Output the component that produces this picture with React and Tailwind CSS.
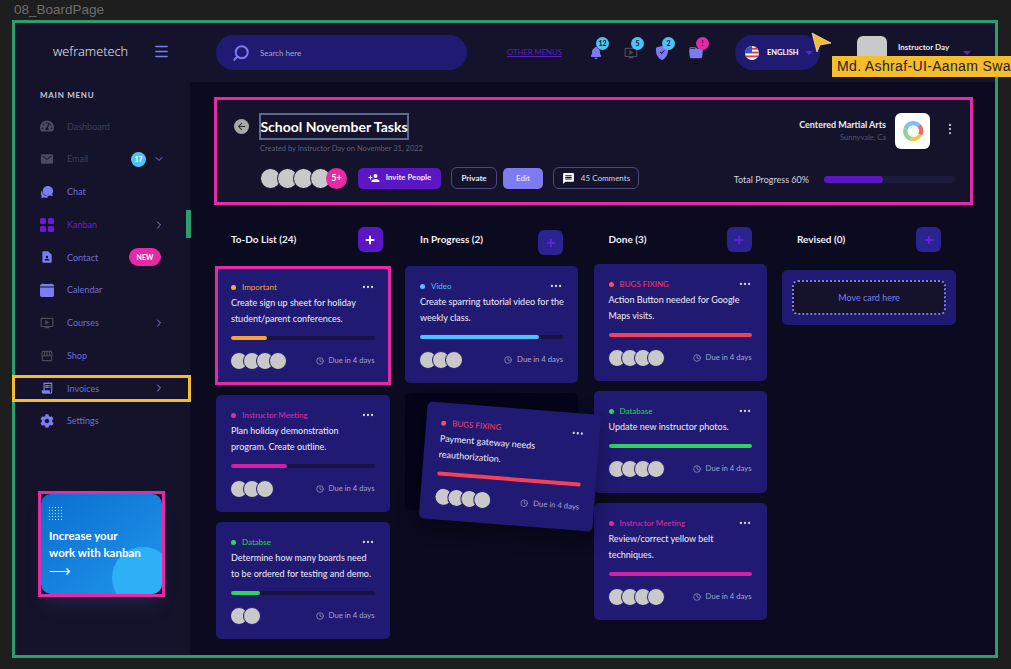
import { ChevronDown, ChevronRight, Clock, Menu, MoreHorizontal, MoreVertical, Plus, Search } from "lucide-react";
import { BsCalendarFill, BsFolderFill, BsShieldFillCheck } from "react-icons/bs";
import { FaCog, FaTachometerAlt } from "react-icons/fa";
import { IoChatbubbles, IoMail, IoNotifications } from "react-icons/io5";
import { MdArrowBack, MdContactPage, MdMessage, MdOndemandVideo, MdPersonAdd, MdReceiptLong, MdStorefront } from "react-icons/md";

const KanbanIcon = ({ className }) => (
  <svg viewBox="0 0 14 14" className={className} fill="currentColor">
    <rect width="6" height="6" rx="1.6" />
    <rect x="8" width="6" height="6" rx="1.6" />
    <rect y="8" width="6" height="6" rx="1.6" />
    <rect x="8" y="8" width="6" height="6" rx="1.6" />
  </svg>
);

const nav = [
  { label: "Dashboard", icon: FaTachometerAlt, iconColor: "text-[#4b4a63]", textColor: "text-[#3f3e58]" },
  { label: "Email", icon: IoMail, iconColor: "text-[#4b4a63]", textColor: "text-[#3f3e58]", badge: "17" },
  { label: "Chat", icon: IoChatbubbles, iconColor: "text-[#7c7cf0]", textColor: "text-[#6f6fd8]" },
  { label: "Kanban", icon: KanbanIcon, iconColor: "text-[#6a1bd1]", textColor: "text-[#6a1bd1]", arrow: true, active: true },
  { label: "Contact", icon: MdContactPage, iconColor: "text-[#7c7cf0]", textColor: "text-[#6f6fd8]", isNew: true },
  { label: "Calendar", icon: BsCalendarFill, iconColor: "text-[#7c7cf0]", textColor: "text-[#6f6fd8]" },
  { label: "Courses", icon: MdOndemandVideo, iconColor: "text-[#4b4a55]", textColor: "text-[#6f6fd8]", arrow: true },
  { label: "Shop", icon: MdStorefront, iconColor: "text-[#4b4a55]", textColor: "text-[#6f6fd8]" },
  { label: "Invoices", icon: MdReceiptLong, iconColor: "text-[#7c7cf0]", textColor: "text-[#6f6fd8]", arrow: true, marked: true },
  { label: "Settings", icon: FaCog, iconColor: "text-[#7c7cf0]", textColor: "text-[#6f6fd8]" },
];

const columns = [
  {
    title: "To-Do List (24)", width: "w-[173.5px]", addClass: "mr-[7px] bg-[#5b17c4] text-white", cardsTop: "mt-[14px]",
    cards: [
      { tag: "Important", tagColor: "text-[#f5a13c]", dot: "bg-[#f5b02e]", text: ["Create sign up sheet for holiday", "student/parent conferences."], bar: "w-[25%] bg-[#f9a23c]", people: 4, marked: true },
      { tag: "Instructor Meeting", tagColor: "text-[#e02aa8]", dot: "bg-[#e02aa8]", text: ["Plan holiday demonstration", "program. Create outline."], bar: "w-[39%] bg-[#d41fa8]", people: 3 },
      { tag: "Databse", tagColor: "text-[#2fd35f]", dot: "bg-[#2fd35f]", text: ["Determine how many boards need", "to be ordered for testing and demo."], bar: "w-[20%] bg-[#2fd35f]", people: 2 },
    ],
  },
  {
    title: "In Progress (2)", width: "w-[173px]", addClass: "mr-[15px] mt-[3px] bg-[#2a2390] text-[#5b24d6]", cardsTop: "mt-[14px]",
    cards: [
      { tag: "Video", tagColor: "text-[#4dc3ff]", dot: "bg-[#4dc3ff]", text: ["Create sparring tutorial video for the", "weekly class."], bar: "w-[83%] bg-[#4dc3ff]", people: 3 },
    ],
    slot: true,
  },
  {
    title: "Done (3)", width: "w-[173px]", addClass: "mr-[15px] bg-[#2a2390] text-[#5b24d6]", cardsTop: "mt-[12px]",
    cards: [
      { tag: "BUGS FIXING", tagColor: "text-[#f0406a]", dot: "bg-[#ff4d5e]", text: ["Action Button needed for Google", "Maps visits."], bar: "w-full bg-[#f5405c]", people: 4 },
      { tag: "Database", tagColor: "text-[#2fd35f]", dot: "bg-[#2fd35f]", text: ["Update new instructor photos."], bar: "w-full bg-[#2fd35f]", people: 4, extra: "!pb-[16px]" },
      { tag: "Instructor Meeting", tagColor: "text-[#e02aa8]", dot: "bg-[#e02aa8]", text: ["Review/correct yellow belt", "techniques."], bar: "w-full bg-[#d41fa8]", people: 4 },
    ],
  },
  { title: "Revised (0)", width: "w-[174px]", addClass: "mr-[15px] bg-[#2a2390] text-[#5b24d6]", cardsTop: "mt-[18px]", cards: [], empty: true },
];

const Avatars = ({ count }) => (
  <div className="flex">
    {Array.from({ length: count }).map((_, i) => (
      <span key={i} className="-my-px -ml-px -mr-1 box-content h-4 w-4 rounded-full border border-[#201a73] bg-[#c9c9c9]" />
    ))}
  </div>
);

const TaskBody = ({ card }) => (
  <>
    <div className="flex h-3 items-center">
      <span className={`h-[5px] w-[5px] rounded-full ${card.dot}`} />
      <span className={`ml-[6px] text-[8px] ${card.tagColor}`}>{card.tag}</span>
      <MoreHorizontal className="ml-auto h-[14px] w-[14px] text-[#d5d5ea]" />
    </div>
    <div className="mt-[2px] text-[9px] leading-4 text-[#f0effa]">
      {card.text.map((line) => (
        <div key={line} className="whitespace-nowrap">{line}</div>
      ))}
    </div>
    <div className="mt-[9px] h-1 rounded-full bg-[#16143f]">
      <div className={`h-full rounded-full ${card.bar}`} />
    </div>
    <div className="mt-[13px] flex items-center">
      <Avatars count={card.people} />
      <span className="ml-auto flex items-center gap-[5px] text-[7.7px] text-[#a7a6cf]">
        <Clock className="h-2 w-2" />
        Due in 4 days
      </span>
    </div>
  </>
);

const TaskCard = ({ card }) => (
  <div className={`rounded-[5px] bg-[#201a73] ${card.marked ? "-mx-px !rounded-none border-[3px] border-[#e52aa5] px-[13px] pb-[13px] pt-[12px]" : "px-[15px] pb-[15px] pt-[14px]"} ${card.extra || ""}`}>
    <TaskBody card={card} />
  </div>
);

const Flag = () => (
  <svg viewBox="0 0 16 16" className="h-[14px] w-[14px]">
    <clipPath id="flag"><circle cx="8" cy="8" r="8" /></clipPath>
    <g clipPath="url(#flag)">
      <rect width="16" height="16" fill="#fff" />
      <rect y="2" width="16" height="2.2" fill="#e0394a" />
      <rect y="6.4" width="16" height="2.2" fill="#e0394a" />
      <rect y="10.8" width="16" height="2.2" fill="#e0394a" />
      <rect width="8" height="8" fill="#3b55c4" />
    </g>
  </svg>
);

const TopIcon = ({ icon: Icon, color, count, badge, margin }) => (
  <div className={`relative ${margin}`}>
    <Icon className={`h-[14px] w-[14px] ${color}`} />
    <span className={`absolute -right-[6px] -top-[9px] flex h-[13px] w-[13px] items-center justify-center rounded-full text-[7px] font-bold text-[#14132b] ${badge}`}>{count}</span>
  </div>
);

const Logo = () => (
  <svg viewBox="0 0 36 36" className="h-[22px] w-[22px]" fill="none" strokeWidth="7">
    <path d="M6 14A13 13 0 0 1 28 9.5" stroke="#7cc0f0" />
    <path d="M28 9.5A13 13 0 0 1 30 24" stroke="#ea6a6e" />
    <path d="M30 24A13 13 0 0 1 14 30.5" stroke="#f2c84b" />
    <path d="M14 30.5A13 13 0 0 1 6 14" stroke="#8ed29b" />
  </svg>
);

export default function App() {
  return (
    <div className="relative h-[669px] w-[1011px] overflow-hidden bg-[#1e1e1e] font-['Lato',sans-serif]">
      <div className="h-5 pl-[14px] pt-[2px] font-['Liberation_Sans',sans-serif] text-[13.5px] leading-4 text-[#6f6f6f]">08_BoardPage</div>

      <div className="ml-3 flex h-[638px] w-[986px] border-[3px] border-[#2c9e6b] bg-[#0b0a1e]">
        {/* sidebar */}
        <aside className="flex w-[175px] shrink-0 flex-col bg-[#14132b]">
          <div className="flex h-[56px] items-center pl-[38px] pt-[1px]">
            <span className="w-[75px] whitespace-nowrap font-['Noto_Sans',sans-serif] text-[12.7px] font-light text-[#e4e4f0]">wefra<span>metech</span></span>
            <Menu className="ml-[25px] h-[17px] w-[17px] text-[#7c7cf0]" />
          </div>
          <div className="ml-[25px] mt-[10px] text-[8px] font-bold tracking-[0.09em] text-[#c9c9d8]">MAIN MENU</div>
          <nav className="mt-[9px]">
            {nav.map((item) => (
              <div key={item.label} className="relative flex h-[32.75px] items-center pl-[25px]">
                <item.icon className={`h-[14px] w-[14px] ${item.iconColor}`} />
                <span className={`ml-[13px] text-[9px] ${item.textColor}`}>{item.label}</span>
                {item.badge && (
                  <>
                    <span className="ml-auto flex h-[15px] w-[15px] items-center justify-center rounded-full bg-[#4dc3f5] text-[7px] font-bold text-white">{item.badge}</span>
                    <ChevronDown className="ml-[7px] mr-[25px] h-3 w-3 text-[#7c7cf0]" />
                  </>
                )}
                {item.isNew && <span className="absolute right-[29px] flex h-[18px] w-8 items-center justify-center rounded-full bg-[#e52aa5] text-[7px] font-bold text-white">NEW</span>}
                {item.arrow && <ChevronRight className="absolute right-[25px] h-3 w-3 text-[#8a8ae0]" />}
                {item.active && <span className="absolute -right-px top-[2px] h-7 w-[5px] bg-[#2c9e6b]" />}
                {item.marked && <span className="absolute -left-[3px] -right-px top-[3px] bottom-[3px] border-[3px] border-[#f5bc2c]" />}
              </div>
            ))}
          </nav>
          <div className="ml-[23px] mt-[53px] h-[106px] w-[127px] border-[3px] border-[#e52aa5] bg-[#14132b] shadow-[0_14px_18px_-8px_rgba(70,80,130,0.3)]">
            <div className="relative h-full overflow-hidden rounded-[10px] bg-gradient-to-br from-[#0a6fd0] to-[#2196ea] pl-[8px] pt-[13px]">
              <span className="absolute -bottom-[15px] -right-[12px] h-[62px] w-[62px] rounded-full bg-[#2db0f6]" />
              <div className="relative grid w-[13px] grid-cols-5 gap-[2px]">
                {Array.from({ length: 25 }).map((_, i) => (
                  <span key={i} className="h-px w-px bg-[#cfe7fb]" />
                ))}
              </div>
              <div className="relative mt-[7px] text-[11.5px] font-bold leading-[17px] text-white">Increase your<br />work with kanban</div>
              <div className="relative mt-[1px] text-[15px] leading-4 text-white">⟶</div>
            </div>
          </div>
        </aside>

        <main className="flex min-w-0 flex-1 flex-col">
          {/* top bar */}
          <header className="flex h-[59px] shrink-0 items-center bg-[#14132b] pl-[26px]">
            <div className="flex h-[35px] w-[251px] items-center rounded-full bg-[#201a73] pl-[16px]">
              <Search className="h-[18px] w-[18px] -scale-x-100 text-[#7c7cf0]" strokeWidth={2.6} />
              <span className="ml-[10px] text-[8px] text-[#a7a6cf]">Search here</span>
            </div>
            <span className="ml-10 w-[54px] whitespace-nowrap text-[7.7px] text-[#5b1fc0] underline">OTHER MENUS</span>
            <TopIcon icon={IoNotifications} color="text-[#7c7cf0]" count="12" badge="bg-[#4dc3f5]" margin="ml-[28px]" />
            <TopIcon icon={MdOndemandVideo} color="text-[#4b4a55]" count="5" badge="bg-[#4dc3f5]" margin="ml-[21px]" />
            <TopIcon icon={BsShieldFillCheck} color="text-[#7c7cf0]" count="2" badge="bg-[#4dc3f5]" margin="ml-[17px]" />
            <TopIcon icon={BsFolderFill} color="text-[#7c7cf0]" count="!" badge="bg-[#e52aa5]" margin="ml-[20px]" />
            <div className="ml-[32px] flex h-[35px] w-[85px] items-center rounded-full bg-[#201a73] pl-[10px]">
              <Flag />
              <span className="ml-[8px] w-[31px] whitespace-nowrap text-[7.5px] font-bold text-white">ENGLISH</span>
              <span className="ml-[7px] mt-px h-0 w-0 border-x-[4px] border-t-[4px] border-x-transparent border-t-[#5b24d6]" />
            </div>
            <div className="ml-[37px] h-[34px] w-[30px] rounded-[6px] bg-[#c9c9c9]" />
            <span className="mb-[12px] ml-[11px] w-[51px] whitespace-nowrap text-[8px] font-bold text-[#ecebf5]">Instructor Day</span>
            <span className="ml-[14px] mt-px h-0 w-0 border-x-[4px] border-t-[4px] border-x-transparent border-t-[#5b24d6]" />
          </header>

          {/* board heading */}
          <section className="ml-6 mt-[15px] h-[108px] w-[759px] shrink-0 border-[3px] border-[#e52aa5] bg-[#14132b]">
            <div className="flex h-full">
              <div className="flex flex-col pl-[17px] pt-[13px]">
                <div className="flex items-center">
                  <span className="flex h-[15px] w-[15px] items-center justify-center rounded-full bg-[#a9a9a9]">
                    <MdArrowBack className="h-[11px] w-[11px] text-[#2a2a30]" />
                  </span>
                  <h1 className="ml-[10px] flex h-[27px] w-[150px] items-center justify-center border-2 border-[#5c6b8c] text-[14px] font-bold whitespace-nowrap text-white">School November Tasks</h1>
                </div>
                <p className="ml-[26px] mt-[3px] text-[7.5px] leading-[12px] text-[#5f5e78]">Created by Instructor Day on November 31, 2022</p>
                <div className="ml-[26px] mt-[12px] flex items-center">
                  <div className="flex">
                    {[0, 1, 2, 3].map((i) => (
                      <span key={i} className="-mr-[4.5px] h-[21px] w-[21px] rounded-full border border-[#14132b] bg-[#c9c9c9]" />
                    ))}
                    <span className="flex h-[21px] w-[21px] items-center justify-center rounded-full bg-[#e52aa5] text-[9px] font-bold text-white">5+</span>
                  </div>
                  <button className="ml-[11px] flex h-[21px] w-[83px] items-center justify-center gap-[6px] rounded-[5px] bg-[#5b17c4] text-[7.8px] font-bold text-[#ecebf5]">
                    <MdPersonAdd className="h-[12px] w-[12px] text-white" />
                    Invite People
                  </button>
                  <button className="ml-[10px] flex h-[22px] w-[46px] items-center justify-center rounded-[6px] border border-[#4b4a7a] text-[8px] font-bold text-[#ecebf5]">Private</button>
                  <button className="ml-[6px] flex h-[21px] w-10 items-center justify-center rounded-[5px] bg-[#7c7cf0] text-[8px] font-bold text-[#dcdcff]">Edit</button>
                  <button className="ml-[10px] flex h-[22px] w-[86px] items-center justify-center gap-[6px] rounded-[6px] border border-[#4b4a7a] text-[8px] text-[#d5d5ea]">
                    <MdMessage className="h-[13px] w-[13px] text-white" />
                    45 Comments
                  </button>
                </div>
              </div>
              <div className="ml-auto flex flex-col pr-[15px] pt-[13px]">
                <div className="flex items-start justify-end">
                  <div className="mr-[9px] mt-[6px] text-right">
                    <div className="text-[9px] font-bold leading-3 whitespace-nowrap text-[#ecebf5]">Centered Martial Arts</div>
                    <div className="mt-[2px] text-[7.5px] leading-[10px] text-[#54536c]">Sunnyvale, Ca</div>
                  </div>
                  <div className="flex h-9 w-[35px] items-center justify-center rounded-[6px] bg-white"><Logo /></div>
                  <MoreVertical className="ml-[13px] mr-[-2px] mt-[9px] h-[14px] w-[14px] text-[#b5b5c8]" />
                </div>
                <div className="mt-[24px] flex items-center justify-end">
                  <span className="text-[9px] text-[#d5d5ea]">Total Progress 60%</span>
                  <div className="ml-[15px] h-[7px] w-[131px] rounded-full bg-[#1d1b3d]">
                    <div className="h-full w-[45%] rounded-full bg-[#5b17c4]" />
                  </div>
                </div>
              </div>
            </div>
          </section>

          {/* kanban */}
          <section className="ml-[26px] mt-[22px] flex items-start gap-[15.5px]">
            {columns.map((col) => (
              <div key={col.title} className={`shrink-0 ${col.width}`}>
                <div className="flex h-[25px] items-start">
                  <h2 className="ml-[15px] mt-[5px] text-[10px] font-bold leading-[15px] text-[#f0effa]">{col.title}</h2>
                  <button className={`ml-auto flex h-[25px] w-[25px] shrink-0 items-center justify-center rounded-[6px] ${col.addClass}`}>
                    <Plus className="h-[12px] w-[12px]" strokeWidth={4} />
                  </button>
                </div>
                <div className={`flex flex-col gap-[10px] ${col.cardsTop}`}>
                  {col.cards.map((card) => (
                    <TaskCard key={card.tag + card.text[0]} card={card} />
                  ))}
                  {col.slot && (
                    <div className="relative h-[117px] rounded-[5px] bg-[#05041a]">
                      <div className="absolute left-[18px] top-[15px] w-[174px] rotate-[4.5deg] rounded-[5px] bg-[#201a73] px-[15px] pb-[15px] pt-[14px] shadow-[0_6px_20px_rgba(0,0,0,0.4)]">
                        <TaskBody card={{ tag: "BUGS FIXING", tagColor: "text-[#f0406a]", dot: "bg-[#ff4d5e]", text: ["Payment gateway needs", "reauthorization."], bar: "w-full bg-[#f5405c]", people: 4 }} />
                      </div>
                    </div>
                  )}
                  {col.empty && (
                    <div className="rounded-[5px] bg-[#201a73] p-[10px]">
                      <div className="flex h-[35px] items-center justify-center rounded-[6px] border-2 border-dotted border-[#7c7cf0] bg-[#14132b] text-[9px] text-[#7c7cf0]">Move card here</div>
                    </div>
                  )}
                </div>
              </div>
            ))}
          </section>
        </main>
      </div>

      {/* figma cursor and name tag */}
      <svg viewBox="0 0 20 20" className="absolute left-[811px] top-[32px] h-5 w-5">
        <path d="M1 1L20 11L9 13L6 20Z" fill="#f5bc2c" stroke="#fff" strokeWidth="0.6" />
      </svg>
      <div className="absolute left-[832px] top-[56px] h-[21px] w-[179px] overflow-hidden bg-[#f5bc2c] pl-[5px] font-['Liberation_Sans',sans-serif] text-[14px] leading-[21px] tracking-[0.35px] whitespace-nowrap text-[#222]">Md. Ashraf-UI-Aanam Swa</div>
    </div>
  );
}
